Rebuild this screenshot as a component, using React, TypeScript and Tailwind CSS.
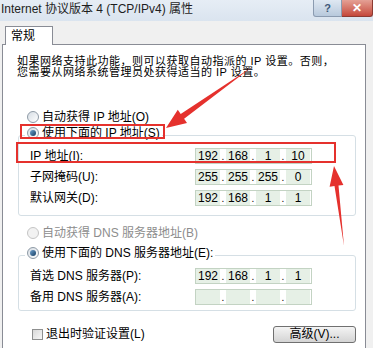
import React from 'react'

const FONT = '"Liberation Sans", "Noto Sans CJK SC", sans-serif'

type RadioProps = { checked?: boolean; disabled?: boolean; label: string }

const Radio: React.FC<RadioProps> = ({ checked, disabled, label }) => (
  <div className="flex h-[12px] items-center gap-[3px]">
    <span
      className={
        'flex h-[12px] w-[12px] items-center justify-center rounded-full border ' +
        (disabled
          ? 'border-[#c5c5c5] bg-[#f2f2f2]'
          : 'border-[#8e9aa6] bg-gradient-to-br from-[#d6dde4] to-[#ffffff]')
      }
    >
      {checked && (
        <span className="h-[6px] w-[6px] rounded-full bg-gradient-to-br from-[#6fa2d0] to-[#173f63]" />
      )}
    </span>
    <span className={'text-[12px] leading-[12px] ' + (disabled ? 'text-[#8d8d8d]' : 'text-black')}>{label}</span>
  </div>
)

const IpField: React.FC<{ parts: string[] }> = ({ parts }) => (
  <div className="flex h-[16px] w-[117px] items-center border border-[#c3d3c3] bg-white text-[12px] leading-[14px]">
    {parts.map((p, i) => (
      <React.Fragment key={i}>
        {i > 0 && <span className="flex h-full w-[6px] items-end justify-center pb-[1px] text-[10px] leading-[10px]">.</span>}
        <span className="flex h-full w-[24px] items-center justify-center bg-[#e6f0e6]">{p}</span>
      </React.Fragment>
    ))}
  </div>
)

const Row: React.FC<{ label: string; parts: string[] }> = ({ label, parts }) => (
  <div className="flex h-[21px] items-center pl-[11px]">
    <span className="w-[165px] text-[12px] leading-[12px]">{label}</span>
    <IpField parts={parts} />
  </div>
)

const Legend: React.FC<{ children: React.ReactNode }> = ({ children }) => (
  <legend className="ml-[6px] h-[16px] px-[2px] pb-[4px]">
    <div className="flex h-[12px] items-center">{children}</div>
  </legend>
)

export default function App() {
  return (
    <div className="relative h-[348px] w-[373px] overflow-hidden bg-[#f0f0f0] text-black" style={{ fontFamily: FONT }}>
      {/* title bar */}
      <div className="flex h-[21px] items-start justify-between bg-gradient-to-b from-[#e6edf5] to-[#dae4ef]">
        <span className="pl-[1px] pt-[2px] text-[12px] leading-[14px] text-[#1e1e1e]">
          Internet 协议版本 4 (TCP/IPv4) 属性
        </span>
        <div className="flex">
          <div className="flex h-[17px] w-[29px] items-center justify-center rounded-bl-[3px] border border-t-0 border-[#8b9bb0] bg-gradient-to-b from-[#dfe8f2] to-[#b8c9dc] text-[11px] font-bold leading-[11px] text-[#3d5878]">
            ?
          </div>
          <div className="flex h-[17px] w-[31px] items-center justify-center rounded-br-[3px] border border-l-0 border-t-0 border-[#8c3b33] bg-gradient-to-b from-[#e4a095] to-[#c4473b] text-[12px] font-bold leading-[12px] text-white">
            ✕
          </div>
        </div>
      </div>

      {/* tab */}
      <div className="mt-[4px] flex pl-[5px]">
        <div className="relative top-[1px] flex h-[19px] w-[48px] items-center border border-b-0 border-[#898c95] bg-white pl-[5px] text-[12px] leading-[12px]">
          常规
        </div>
      </div>

      {/* panel */}
      <div className="ml-[2px] h-[320px] w-[364px] border border-[#898c95] bg-white">
        <div className="mt-[11px] pl-[14px] text-[11px] leading-[11px] tracking-[0.5px]">
          <div>如果网络支持此功能，则可以获取自动指派的 IP 设置。否则，</div>
          <div>您需要从网络系统管理员处获得适当的 IP 设置。</div>
        </div>

        <div className="mt-[31px] flex h-[16px] items-center pl-[24px]">
          <Radio label="自动获得 IP 地址(O)" />
        </div>

        <fieldset className="ml-[15px] mt-[2px] w-[338px] rounded-[3px] border border-[#d5dfe5] pb-[7px]">
          <Legend>
            <Radio checked label="使用下面的 IP 地址(S)" />
          </Legend>
          <div className="pt-[2px]">
            <Row label="IP 地址(I):" parts={['192', '168', '1', '10']} />
            <Row label="子网掩码(U):" parts={['255', '255', '255', '0']} />
            <Row label="默认网关(D):" parts={['192', '168', '1', '1']} />
          </div>
        </fieldset>

        <div className="mt-[9px] flex h-[16px] items-center pl-[24px]">
          <Radio disabled label="自动获得 DNS 服务器地址(B)" />
        </div>

        <fieldset className="ml-[15px] mt-[6px] w-[338px] rounded-[3px] border border-[#d5dfe5] pb-[3px]">
          <Legend>
            <Radio checked label="使用下面的 DNS 服务器地址(E):" />
          </Legend>
          <div className="pt-[2px]">
            <Row label="首选 DNS 服务器(P):" parts={['192', '168', '1', '1']} />
            <Row label="备用 DNS 服务器(A):" parts={['', '', '', '']} />
          </div>
        </fieldset>

        <div className="mt-[14px] flex h-[18px] items-center justify-between pl-[29px] pr-[9px]">
          <div className="flex items-center gap-[3px]">
            <span className="h-[11px] w-[11px] border border-[#8e8f8f] bg-gradient-to-br from-[#d8d8d8] to-[#f7f7f7]" />
            <span className="text-[12px] leading-[12px]">退出时验证设置(L)</span>
          </div>
          <button className="flex h-[17px] w-[83px] items-center justify-center rounded-[3px] border border-[#707070] bg-gradient-to-b from-[#f4f4f4] to-[#d4d4d4] text-[12px] leading-[12px]">
            高级(V)...
          </button>
        </div>
      </div>

      {/* red annotations */}
      <svg className="pointer-events-none absolute inset-0" width="373" height="348" viewBox="0 0 373 348">
        <rect x="21" y="125" width="143" height="13" fill="none" stroke="#e5312d" strokeWidth="2" />
        <rect x="17" y="143" width="318" height="19" fill="none" stroke="#e5312d" strokeWidth="2" />
        <polygon
          points="252,67 184.1,118.8 187,123 166,128 177.8,109.8 180.7,114"
          fill="#e5312d"
        />
        <polygon
          points="344,246 338.5,185.5 343.4,184.9 334,166 329.6,186.7 334.5,186"
          fill="#e5312d"
        />
      </svg>
    </div>
  )
}
